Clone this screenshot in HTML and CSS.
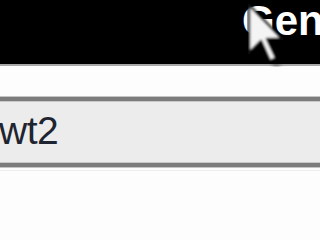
FILE: index.html
```html
<!DOCTYPE html>
<html>
<head>
<meta charset="utf-8">
<link rel="stylesheet" href="styles.css">
</head>
<body>
<div class="page">
  <header class="topbar">
    <span class="title">Gen</span>
  </header>
  <main class="content">
    <div class="field">
      <span class="value">wt2</span>
    </div>
    <div class="rule"></div>
  </main>
  <svg class="cursor" width="40" height="64" viewBox="0 0 40 64">
    <defs>
      <filter id="blur" x="-20%" y="-20%" width="140%" height="140%">
        <feGaussianBlur stdDeviation="0.8"/>
      </filter>
      <filter id="shadow" x="-50%" y="-50%" width="200%" height="200%">
        <feGaussianBlur stdDeviation="2.5"/>
      </filter>
    </defs>
    <polygon points="4,6 4,54 16,42 25,62 31,59 22,40 37,40" fill="#000" opacity="0.35" filter="url(#shadow)" transform="translate(3,4)"/>
    <polygon points="2,2 2,50 14,38 23,58 29,55 20,36 35,36" fill="#f4f4f4" stroke="#111" stroke-width="2.5" stroke-linejoin="round" filter="url(#blur)"/>
  </svg>
</div>
</body>
</html>
```
FILE: styles.css
```css
html, body {
  margin: 0;
  padding: 0;
  background: #fdfdfd;
  overflow: hidden;
}
.page {
  position: relative;
  width: 320px;
  height: 240px;
  overflow: hidden;
  font-family: "Liberation Sans", Arial, sans-serif;
}
.topbar {
  height: 64px;
  background: #000;
  border-bottom: 2px solid #a8a8a8;
  display: flex;
  align-items: flex-start;
  padding-left: 242px;
  white-space: nowrap;
  overflow: hidden;
}
.title {
  color: #fff;
  font-size: 42px;
  font-weight: bold;
  line-height: 42px;
}
.content {
  padding-top: 31px;
}
.field {
  margin: 0 -20px;
  height: 62px;
  background: #ececec;
  border-top: 4px solid #7c7c7c;
  border-bottom: 4px solid #7c7c7c;
  box-shadow: inset 0 1px 0 #c8c8c8, inset 0 -1px 0 #c8c8c8, 0 -1px 0 #c4c4c4, 0 1px 0 #c4c4c4;
  display: flex;
  align-items: center;
  padding-left: 19px;
}
.value {
  color: #1e2430;
  font-size: 39px;
  line-height: 39px;
  margin-top: -4px;
  letter-spacing: -0.5px;
}
.rule {
  height: 1px;
  margin-top: 3px;
  background: #efefef;
}
.cursor {
  position: absolute;
  left: 247px;
  top: 3px;
}
```
